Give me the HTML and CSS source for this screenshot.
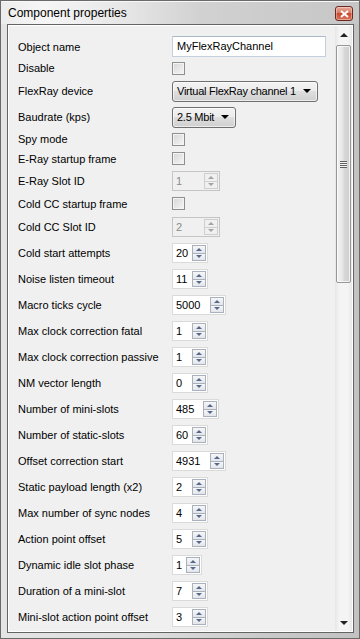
FILE: index.html
```html
<html>
<head>
    <title>Component properties</title>
    <link rel="stylesheet" href="styles.css">
</head>
<body>
<div class="window">
    <div class="titlebar">
        <span class="title">Component properties</span>
        <span class="close">
            <svg width="9" height="8" viewBox="0 0 9 8"><path d="M1 1 L8 7 M8 1 L1 7" stroke="#fff" stroke-width="2"/></svg>
        </span>
    </div>
    <div class="client">
        <div class="props">
            <div class="row h23"><span class="label">Object name</span><span class="edit">MyFlexRayChannel</span></div>
            <div class="row h20"><span class="label">Disable</span><span class="check"></span></div>
            <div class="row h26"><span class="label">FlexRay device</span><span class="combo w-dev"><span class="combo-text">Virtual FlexRay channel 1</span><i class="arrow"></i></span></div>
            <div class="row h26"><span class="label">Baudrate (kps)</span><span class="combo w-baud"><span class="combo-text">2.5 Mbit</span><i class="arrow"></i></span></div>
            <div class="row h18"><span class="label">Spy mode</span><span class="check"></span></div>
            <div class="row h21"><span class="label">E-Ray startup frame</span><span class="check"></span></div>
            <div class="row h24"><span class="label">E-Ray Slot ID</span><span class="spin off w-dis"><span class="val">1</span><span class="btns"><i class="up"></i><i class="dn"></i></span></span></div>
            <div class="row h21"><span class="label">Cold CC startup frame</span><span class="check"></span></div>
            <div class="row h26"><span class="label">Cold CC Slot ID</span><span class="spin off w-dis"><span class="val">2</span><span class="btns"><i class="up"></i><i class="dn"></i></span></span></div>
            <div class="row h26"><span class="label">Cold start attempts</span><span class="spin w2"><span class="val">20</span><span class="btns"><i class="up"></i><i class="dn"></i></span></span></div>
            <div class="row h26"><span class="label">Noise listen timeout</span><span class="spin w2"><span class="val">11</span><span class="btns"><i class="up"></i><i class="dn"></i></span></span></div>
            <div class="row h26"><span class="label">Macro ticks cycle</span><span class="spin w4"><span class="val">5000</span><span class="btns"><i class="up"></i><i class="dn"></i></span></span></div>
            <div class="row h26"><span class="label">Max clock correction fatal</span><span class="spin w2"><span class="val">1</span><span class="btns"><i class="up"></i><i class="dn"></i></span></span></div>
            <div class="row h26"><span class="label">Max clock correction passive</span><span class="spin w2"><span class="val">1</span><span class="btns"><i class="up"></i><i class="dn"></i></span></span></div>
            <div class="row h26"><span class="label">NM vector length</span><span class="spin w2"><span class="val">0</span><span class="btns"><i class="up"></i><i class="dn"></i></span></span></div>
            <div class="row h26"><span class="label">Number of mini-slots</span><span class="spin w3"><span class="val">485</span><span class="btns"><i class="up"></i><i class="dn"></i></span></span></div>
            <div class="row h26"><span class="label">Number of static-slots</span><span class="spin w2"><span class="val">60</span><span class="btns"><i class="up"></i><i class="dn"></i></span></span></div>
            <div class="row h26"><span class="label">Offset correction start</span><span class="spin w4"><span class="val">4931</span><span class="btns"><i class="up"></i><i class="dn"></i></span></span></div>
            <div class="row h26"><span class="label">Static payload length (x2)</span><span class="spin w2"><span class="val">2</span><span class="btns"><i class="up"></i><i class="dn"></i></span></span></div>
            <div class="row h26"><span class="label">Max number of sync nodes</span><span class="spin w2"><span class="val">4</span><span class="btns"><i class="up"></i><i class="dn"></i></span></span></div>
            <div class="row h26"><span class="label">Action point offset</span><span class="spin w2"><span class="val">5</span><span class="btns"><i class="up"></i><i class="dn"></i></span></span></div>
            <div class="row h26"><span class="label">Dynamic idle slot phase</span><span class="spin w1"><span class="val">1</span><span class="btns"><i class="up"></i><i class="dn"></i></span></span></div>
            <div class="row h26"><span class="label">Duration of a mini-slot</span><span class="spin w2"><span class="val">7</span><span class="btns"><i class="up"></i><i class="dn"></i></span></span></div>
            <div class="row h26"><span class="label">Mini-slot action point offset</span><span class="spin w2"><span class="val">3</span><span class="btns"><i class="up"></i><i class="dn"></i></span></span></div>
        </div>
        <div class="scrollbar">
            <div class="sb-btn"><i class="tri-up"></i></div>
            <div class="thumb"><span class="grip"></span></div>
            <div class="sb-track"></div>
            <div class="sb-btn"><i class="tri-dn"></i></div>
        </div>
    </div>
</div>
</body>
</html>
```

FILE: styles.css
```css
* { margin: 0; padding: 0; box-sizing: border-box; }
body { width: 360px; height: 639px; overflow: hidden; font-family: "Liberation Sans", Arial, sans-serif; font-size: 11px; color: #000; background: #c8c8c8; }

.window { width: 360px; height: 639px; border: 1px solid #6a6a6a; padding: 0 5px 5px 6px; display: flex; flex-direction: column;
    background: linear-gradient(to right, #e4e4e4, #dedede 40%, #c9c9c9 75%, #c2c2c2); }
.titlebar { height: 23px; display: flex; align-items: center; justify-content: space-between; margin: 0 -5px 0 -6px; padding: 0 6px 0 7px;
    background: linear-gradient(to right, #ececec, #f6f6f6 12%, #e6e6e6 35%, #d2d2d2 55%, #cbcbcb 80%, #c6c6c6); box-shadow: inset 0 1px 0 #f8f8f8; }
.title { font-size: 12px; color: #000; padding-top: 1px; }
.close { width: 18px; height: 15px; margin-top: 2px; border: 1px solid #6b2a20; border-radius: 3px; display: flex; align-items: center; justify-content: center;
    background: linear-gradient(#e9a99a, #d77a64 45%, #c94a31 50%, #d9735a); box-shadow: inset 0 0 0 1px rgba(255,255,255,0.35); }

.client { flex: 1; display: flex; border: 1px solid #646464; box-shadow: inset 0 0 0 1px #fff; background: #f0f0f0; overflow: hidden; }
.props { flex: 1; padding: 10px 0 0 10px; overflow: hidden; }
.row { display: flex; align-items: center; }
.h18 { height: 18px; }
.h20 { height: 20px; }
.h21 { height: 21px; }
.h23 { height: 23px; }
.h24 { height: 24px; }
.h26 { height: 26px; flex-shrink: 0; }
.label { width: 154px; flex-shrink: 0; white-space: nowrap; }

.edit { width: 154px; height: 21px; line-height: 19px; padding-left: 4px; background: #fff; border: 1px solid #c4d0dd; border-top-color: #abb8c8; }

.check { width: 13px; height: 13px; border: 1px solid #8e8f8f; box-shadow: inset 0 0 0 1px #f4f4f4; background: linear-gradient(135deg, #d6d6d6, #f6f6f6); }

.combo { height: 21px; display: flex; align-items: center; justify-content: space-between; padding: 0 6px 0 4px; border: 1px solid #707070; border-radius: 3px;
    background: linear-gradient(#f3f3f3, #ececec 45%, #dedede 50%, #d0d0d0); box-shadow: inset 0 0 0 1px rgba(255,255,255,0.6); }
.combo-text { white-space: nowrap; letter-spacing: -0.25px; }
.w-dev { width: 146px; }
.w-baud { width: 64px; }
.arrow { flex-shrink: 0; width: 0; height: 0; border-left: 4px solid transparent; border-right: 4px solid transparent; border-top: 4px solid #000; }

.spin { height: 20px; display: flex; background: #fff; border: 1px solid #dadada; }
.spin .val { flex: 1; line-height: 18px; padding-left: 3px; }
.spin .btns { width: 14px; display: flex; flex-direction: column; padding: 1px 0; margin-right: 1px; }
.spin .btns i { flex: 1; display: flex; align-items: center; justify-content: center; border: 1px solid #a9b1bd; background: linear-gradient(#f7f7f7, #e2e5ea); }
.spin .btns i + i { border-top: 0; }
.spin .up::before { content: ""; border-left: 3px solid transparent; border-right: 3px solid transparent; border-bottom: 3px solid #56698d; }
.spin .dn::before { content: ""; border-left: 3px solid transparent; border-right: 3px solid transparent; border-top: 3px solid #56698d; }
.spin.off { background: #f0f0f0; border-color: #c5c5c5; color: #8a8a8a; }
.spin.off .btns i { border-color: #cfcfcf; background: #f0f0f0; }
.spin.off .up::before { border-bottom-color: #a3a3a3; }
.spin.off .dn::before { border-top-color: #a3a3a3; }
.w1 { width: 30px; }
.w2 { width: 36px; }
.w3 { width: 47px; }
.w4 { width: 54px; }
.w-dis { width: 48px; }

.scrollbar { width: 17px; margin: 1px 1px 1px 0; display: flex; flex-direction: column;
    background: linear-gradient(to right, #e6e6e6, #f4f4f4 25%, #f4f4f4 75%, #e9e9e9); }
.sb-btn { height: 17px; display: flex; align-items: center; justify-content: center; }
.tri-up { border-left: 4px solid transparent; border-right: 4px solid transparent; border-bottom: 4px solid #222; }
.tri-dn { border-left: 4px solid transparent; border-right: 4px solid transparent; border-top: 4px solid #222; }
.thumb { height: 238px; margin: 2px 1px 0; border: 1px solid #979797; border-radius: 2px; display: flex; align-items: center; justify-content: center;
    background: linear-gradient(to right, #f3f3f3, #e6e6e6 45%, #d7d7d7 55%, #cfcfcf); box-shadow: inset 0 0 0 1px rgba(255,255,255,0.7); }
.grip { width: 7px; height: 7px; background: repeating-linear-gradient(#5e5e5e 0 1px, #f6f6f6 1px 2px); }
.sb-track { flex: 1; }
```
